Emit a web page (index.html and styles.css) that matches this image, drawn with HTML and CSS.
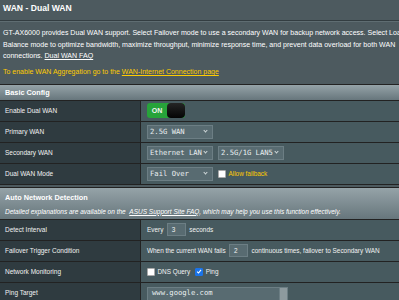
FILE: index.html
```html
<!DOCTYPE html>
<html lang="en">
<head>
  <meta charset="UTF-8" />
  <title>WAN - Dual WAN</title>
  <link rel="stylesheet" href="styles.css">
</head>
<body>
  <div class="page">
    <div class="title">WAN - Dual WAN</div>
    <div class="split"></div>

    <p class="desc">GT-AX6000 provides Dual WAN support. Select Failover mode to use a secondary WAN for backup network access. Select Load Balance mode to optimize bandwidth, maximize throughput, minimize response time, and prevent data overload for both WAN connections. <a class="link" href="#">Dual WAN FAQ</a></p>
    <p class="hint">To enable WAN Aggregation go to the <a class="link" href="#">WAN-Internet Connection page</a></p>

    <div class="form">
      <div class="head">Basic Config</div>
      <div class="row">
        <div class="th">Enable Dual WAN</div>
        <div class="td">
          <div class="switch"><span class="on">ON</span><span class="knob"></span></div>
        </div>
      </div>
      <div class="row">
        <div class="th">Primary WAN</div>
        <div class="td"><span class="sel">2.5G WAN<i class="chev"></i></span></div>
      </div>
      <div class="row">
        <div class="th">Secondary WAN</div>
        <div class="td wide">
          <span class="sel">Ethernet LAN<i class="chev"></i></span>
          <span class="sel">2.5G/1G LAN5<i class="chev"></i></span>
        </div>
      </div>
      <div class="row">
        <div class="th">Dual WAN Mode</div>
        <div class="td wide">
          <span class="sel">Fail Over<i class="chev"></i></span>
          <label class="check"><span class="cb"></span><span class="yellow">Allow failback</span></label>
        </div>
      </div>
    </div>

    <div class="form second">
      <div class="head tall">
        <div>Auto Network Detection</div>
        <div class="note">Detailed explanations are available on the &nbsp;<a class="link" href="#">ASUS Support Site FAQ</a>, which may help you use this function effectively.</div>
      </div>
      <div class="row">
        <div class="th">Detect Interval</div>
        <div class="td"><span>Every</span><span class="box">3</span><span>seconds</span></div>
      </div>
      <div class="row">
        <div class="th">Failover Trigger Condition</div>
        <div class="td"><span>When the current WAN fails</span><span class="box">2</span><span>continuous times, failover to Secondary WAN</span></div>
      </div>
      <div class="row">
        <div class="th">Network Monitoring</div>
        <div class="td wide">
          <label class="check"><span class="cb"></span><span>DNS Query</span></label>
          <label class="check"><span class="cb checked"><svg viewBox="0 0 10 10" width="7" height="7"><path d="M1.8 5.2 L4.2 7.6 L8.4 2.4" fill="none" stroke="#fff" stroke-width="1.8"/></svg></span><span>Ping</span></label>
        </div>
      </div>
      <div class="row">
        <div class="th">Ping Target</div>
        <div class="td top"><span class="text-input">www.google.com<i class="spin"></i></span></div>
      </div>
    </div>
  </div>
</body>
</html>
```
FILE: styles.css
```css
* {
  margin: 0;
  padding: 0;
  box-sizing: border-box;
}

body {
  background: #4d5a5f;
  color: #fff;
  font-family: "Liberation Sans", Arial, sans-serif;
  overflow: hidden;
  width: 399px;
  height: 300px;
}

.page {
  width: 430px;
}

.title {
  font-weight: bold;
  font-size: 8.6px;
  line-height: 16px;
  height: 16px;
  padding-left: 3px;
}

.split {
  margin-top: 4px;
  height: 2px;
  border-top: 1px solid #333d41;
  border-bottom: 1px solid #5f6d72;
}

.desc {
  margin-top: 5px;
  padding-left: 3px;
  width: 424px;
  font-size: 7.05px;
  line-height: 11.5px;
}

.hint {
  margin-top: 4.5px;
  padding-left: 3px;
  font-size: 7px;
  line-height: 11.5px;
  color: #ffcc00;
}

.link {
  color: inherit;
  text-decoration: underline;
}

.form {
  margin-top: 6px;
  border-top: 1px solid #222;
}

.form.second {
  margin-top: 2px;
}

.head {
  height: 16px;
  line-height: 16px;
  padding-left: 5px;
  font-weight: bold;
  font-size: 7.3px;
  background: linear-gradient(#95a3a8, #67767c);
  border-bottom: 1px solid #222;
}

.head.tall {
  height: 32px;
  padding-top: 3px;
  line-height: 14px;
}

.note {
  font-weight: normal;
  font-style: italic;
  font-size: 6.5px;
}

.row {
  display: flex;
  height: 21px;
  border-bottom: 1px solid #222;
}

.th {
  width: 141px;
  flex: none;
  background: #2f3b40;
  border-right: 1px solid #222;
  padding-left: 5px;
  display: flex;
  align-items: center;
  font-size: 6.5px;
  color: #f2f2f2;
}

.td {
  flex: 1;
  background: #475a5f;
  padding-left: 6px;
  display: flex;
  align-items: center;
  gap: 3.5px;
  font-size: 6.4px;
  color: #f2f2f2;
  white-space: nowrap;
}

.td.wide {
  gap: 5px;
}

.td.top {
  align-items: flex-start;
}

.switch {
  display: flex;
  width: 38px;
  height: 15px;
  border-radius: 3px;
  overflow: hidden;
  background: #27a33a;
}

.on {
  width: 20px;
  line-height: 15px;
  text-align: center;
  font-weight: bold;
  font-size: 7px;
}

.knob {
  flex: 1;
  background: linear-gradient(#252525, #040404);
  border-radius: 4px;
}

.sel {
  position: relative;
  display: inline-block;
  width: 66px;
  height: 14px;
  line-height: 12px;
  padding-left: 2px;
  background: #586b71;
  border: 1px solid #6c7e84;
  font-family: "DejaVu Sans Mono", monospace;
  font-size: 7.2px;
  color: #e8eef0;
}

.chev {
  position: absolute;
  right: 5px;
  top: 3.5px;
  width: 3px;
  height: 3px;
  border-right: 1px solid #d0d8da;
  border-bottom: 1px solid #d0d8da;
  transform: rotate(45deg);
}

.check {
  display: flex;
  align-items: center;
  gap: 2.5px;
}

.cb {
  display: inline-flex;
  align-items: center;
  justify-content: center;
  width: 8px;
  height: 8px;
  background: #fff;
  border: 1px solid #aaa;
  border-radius: 1px;
}

.cb.checked {
  background: #1a73e8;
  border-color: #1a73e8;
}

.yellow {
  color: #ffcc00;
}

.box {
  display: inline-block;
  width: 19px;
  height: 13px;
  line-height: 11px;
  padding-left: 4px;
  background: #586b71;
  border: 1px solid #6c7e84;
}

.text-input {
  position: relative;
  display: inline-block;
  width: 141px;
  height: 18px;
  margin-top: 4px;
  padding: 0 0 0 4px;
  line-height: 10px;
  background: #586b71;
  border: 1px solid #6c7e84;
  font-family: "DejaVu Sans Mono", monospace;
  font-size: 7.2px;
  color: #e8eef0;
}

.spin {
  position: absolute;
  right: 0;
  top: 0;
  width: 8px;
  height: 16px;
  background: #8d9a9e;
  border-left: 1px solid #6c7e84;
}
```
